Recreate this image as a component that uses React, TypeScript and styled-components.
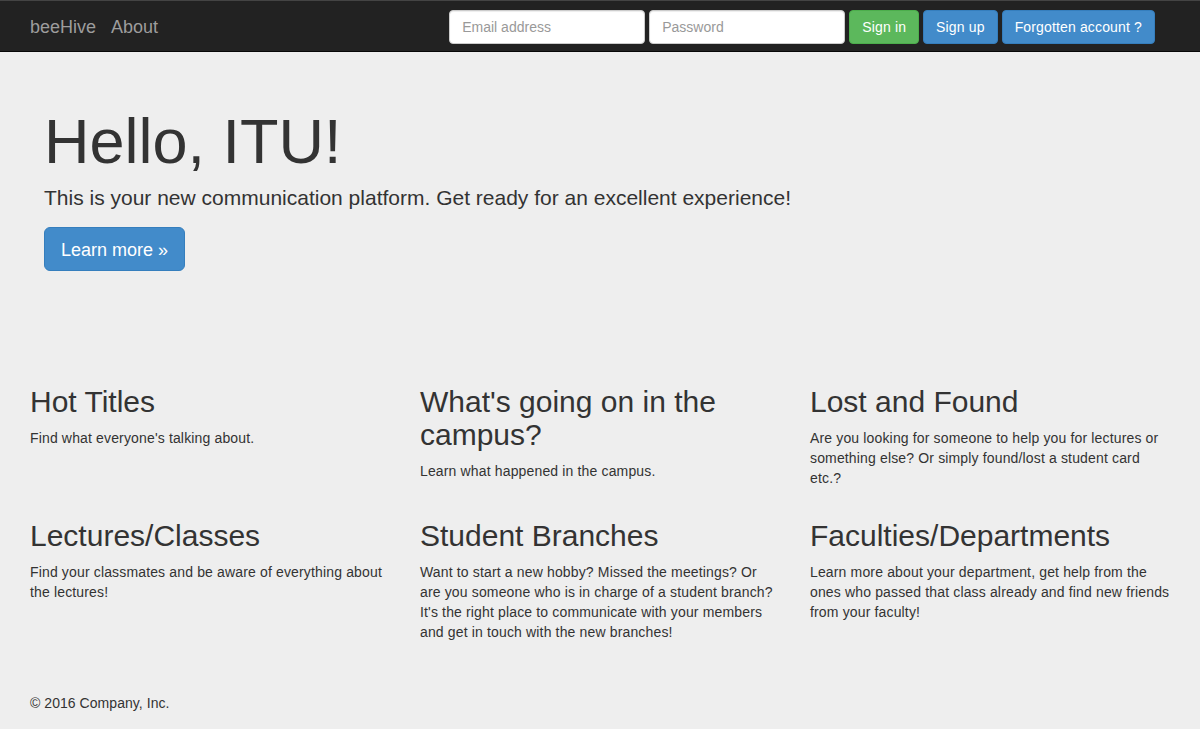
import React from "react";
import styled, { createGlobalStyle } from "styled-components";

const Global = createGlobalStyle`
  html, body { margin: 0; padding: 0; }
  body {
    background: #eeeeee;
    font-family: "Liberation Sans", Arial, Helvetica, sans-serif;
    font-size: 14px;
    line-height: 1.428571;
    color: #333333;
  }
  * { box-sizing: border-box; }
`;

const Navbar = styled.nav`
  background: #222222;
  border-top: 1px solid #444444;
  border-bottom: 1px solid #080808;
  height: 52px;
`;

const NavInner = styled.div`
  display: flex;
  align-items: flex-start;
  padding: 9px 45px 0 30px;
  height: 50px;
`;

const Brand = styled.a`
  font-size: 18px;
  line-height: 34px;
  color: #9d9d9d;
  text-decoration: none;
  margin-right: 15px;
`;

const NavForm = styled.form`
  margin-left: auto;
  display: flex;
  gap: 4px;
`;

const Input = styled.input`
  width: 196px;
  height: 34px;
  padding: 6px 12px;
  font-family: inherit;
  font-size: 14px;
  color: #555;
  background: #fff;
  border: 1px solid #ccc;
  border-radius: 4px;
  box-shadow: inset 0 1px 1px rgba(0, 0, 0, 0.075);
  &::placeholder { color: #999; }
`;

const Button = styled.button<{ $variant: "success" | "primary"; $large?: boolean }>`
  font-family: inherit;
  font-size: ${(p) => (p.$large ? "18px" : "14px")};
  line-height: ${(p) => (p.$large ? "1.3333333" : "1.428571")};
  letter-spacing: ${(p) => (p.$large ? "0" : "0.15px")};
  padding: ${(p) => (p.$large ? "10px 16px" : "7px 12px 5px")};
  border-radius: ${(p) => (p.$large ? "6px" : "4px")};
  color: #fff;
  cursor: pointer;
  background: ${(p) => (p.$variant === "success" ? "#5cb85c" : "#428bca")};
  border: 1px solid ${(p) => (p.$variant === "success" ? "#4cae4c" : "#357ebd")};
  height: ${(p) => (p.$large ? "44px" : "34px")};
`;

const Hero = styled.section`
  padding: 55px 44px 0;
`;

const HeroTitle = styled.h1`
  font-size: 63px;
  font-weight: 500;
  line-height: 1.1;
  margin: 0 0 7px;
`;

const Lead = styled.p`
  font-size: 21px;
  font-weight: 300;
  line-height: 30px;
  margin: 0 0 14px;
`;

const Container = styled.div`
  padding: 94px 15px 0;
`;

const Row = styled.div`
  display: grid;
  grid-template-columns: repeat(3, 390px);
`;

const Col = styled.div`
  padding: 0 15px;
`;

const ColTitle = styled.h2`
  font-size: 30px;
  font-weight: 500;
  line-height: 1.1;
  margin: 20px 0 11px;
`;

const ColText = styled.p`
  margin: 0 0 10px;
  letter-spacing: 0.15px;
`;

const Rule = styled.hr`
  margin: 20px 15px;
  border: 0;
  border-top: 1px solid #eee;
`;

const Footer = styled.footer`
  padding: 0 30px;
  p { margin: 0 0 10px; letter-spacing: 0.05px; }
`;

const features = [
  { title: "Hot Titles", text: "Find what everyone's talking about." },
  { title: "What's going on in the campus?", text: "Learn what happened in the campus." },
  {
    title: "Lost and Found",
    text: "Are you looking for someone to help you for lectures or something else? Or simply found/lost a student card etc.?",
  },
  { title: "Lectures/Classes", text: "Find your classmates and be aware of everything about the lectures!" },
  {
    title: "Student Branches",
    text: "Want to start a new hobby? Missed the meetings? Or are you someone who is in charge of a student branch? It's the right place to communicate with your members and get in touch with the new branches!",
  },
  {
    title: "Faculties/Departments",
    text: "Learn more about your department, get help from the ones who passed that class already and find new friends from your faculty!",
  },
];

export default function App() {
  return (
    <>
      <Global />
      <Navbar>
        <NavInner>
          <Brand href="#">beeHive</Brand>
          <Brand href="#">About</Brand>
          <NavForm onSubmit={(e) => e.preventDefault()}>
            <Input type="text" placeholder="Email address" />
            <Input type="password" placeholder="Password" />
            <Button $variant="success" type="submit">Sign in</Button>
            <Button $variant="primary" type="button">Sign up</Button>
            <Button $variant="primary" type="button">Forgotten account ?</Button>
          </NavForm>
        </NavInner>
      </Navbar>
      <Hero>
        <HeroTitle>Hello, ITU!</HeroTitle>
        <Lead>This is your new communication platform. Get ready for an excellent experience!</Lead>
        <Button $variant="primary" $large type="button">Learn more »</Button>
      </Hero>
      <Container>
        <Row>
          {features.slice(0, 3).map((f) => (
            <Col key={f.title}>
              <ColTitle>{f.title}</ColTitle>
              <ColText>{f.text}</ColText>
            </Col>
          ))}
        </Row>
        <Row>
          {features.slice(3).map((f) => (
            <Col key={f.title}>
              <ColTitle>{f.title}</ColTitle>
              <ColText>{f.text}</ColText>
            </Col>
          ))}
        </Row>
        <Rule />
      </Container>
      <Footer>
        <p>© 2016 Company, Inc.</p>
      </Footer>
    </>
  );
}
